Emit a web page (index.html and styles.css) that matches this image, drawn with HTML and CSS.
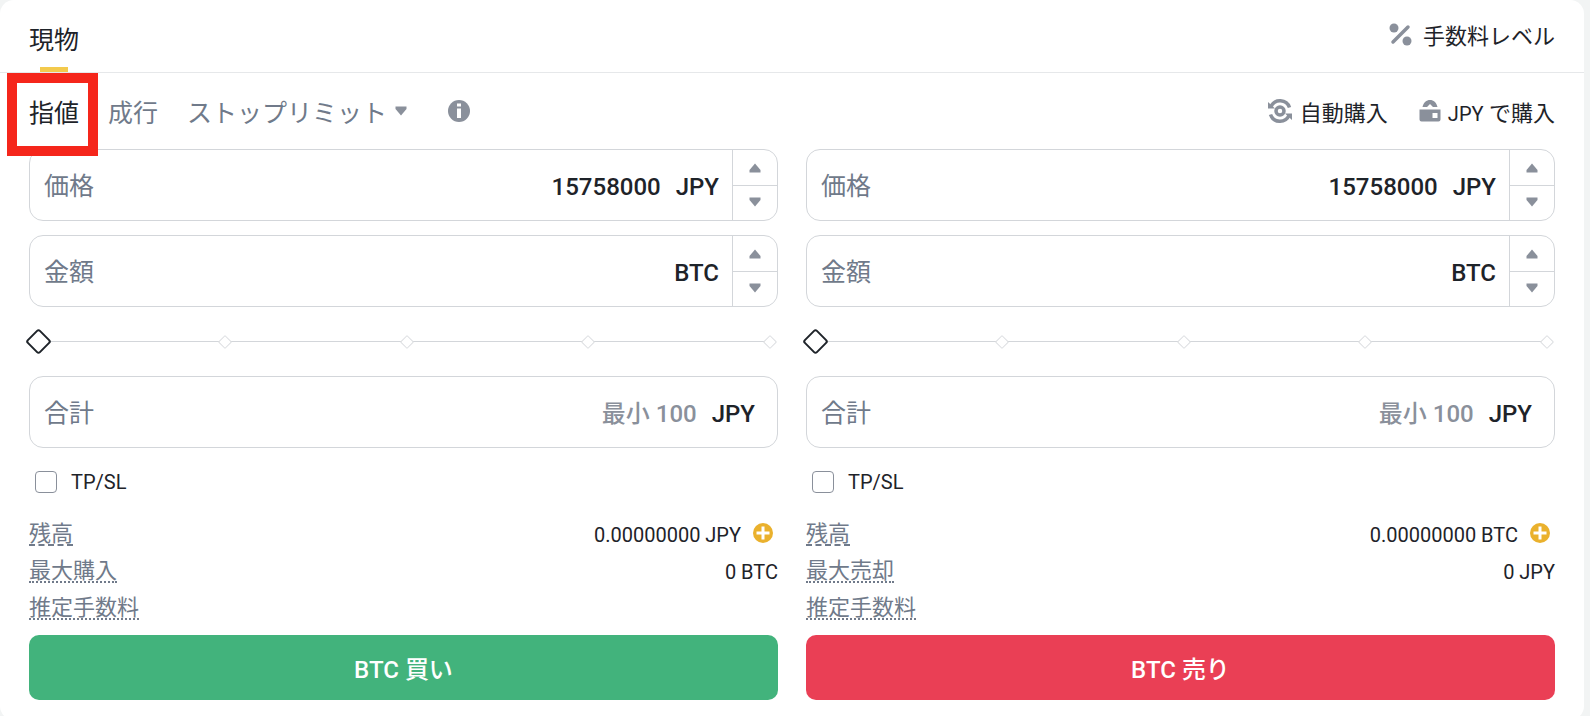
FILE: index.html
```
<!DOCTYPE html>
<html lang="ja">
<head>
    <meta charset="UTF-8">
    <meta name="viewport" content="width=device-width, initial-scale=1.0">
    <title>現物取引</title>
    <link rel="stylesheet" href="styles.css">
</head>
<body>

    <main class="panel">
        <header class="panel-header">
            <button type="button" class="market-tab">現物</button>
            <a href="#" class="fee-link">
                <svg width="24" height="24" viewBox="0 0 24 24">
                    <circle cx="6" cy="6" r="4.5"/>
                    <circle cx="19" cy="19" r="4.5"/>
                    <path d="M5 20L20 5" fill="none" stroke="#8a909b" stroke-width="3.5" stroke-linecap="round"/>
                </svg>
                手数料レベル
            </a>
        </header>

        <nav class="order-bar">
            <div class="order-tabs">
                <button type="button" class="order-tab active">指値</button>
                <button type="button" class="order-tab">成行</button>
                <button type="button" class="order-tab">ストップリミット
                    <svg width="12" height="10" viewBox="0 0 12 10"><path d="M0.5 0.5H11.5V3L6 9.5L0.5 3Z"/></svg>
                </button>
                <button type="button" class="info" aria-label="情報">
                    <svg width="24" height="24" viewBox="0 0 24 24">
                        <circle cx="12" cy="12" r="11"/>
                        <path d="M10 4.5h4v3h-4zM10 9.5h4v9.500h-4z" fill="#fff"/>
                    </svg>
                </button>
            </div>
            <div class="order-links">
                <a href="#">
                    <svg width="26" height="26" viewBox="0 0 26 26">
                        <path d="M4 8.5A10 10 0 0 1 22.5 9.500M22 17.500A10 10 0 0 1 3.500 16.500" fill="none" stroke="#8a909b" stroke-width="3.5"/>
                        <path d="M1 4V10.500H8ZM25 22V15.500H18Z"/>
                        <circle cx="13" cy="13" r="4" fill="none" stroke="#8a909b" stroke-width="3.5"/>
                    </svg>
                    自動購入
                </a>
                <a href="#">
                    <svg width="22" height="24" viewBox="0 0 22 24">
                        <path d="M3.5 8C4.5 3.500 7.500 1 11 1S17.500 3.500 18.500 8H14L11 5L8 8Z"/>
                        <path fill-rule="evenodd" d="M0.5 10.500H21.500V20.500Q21.500 22.500 19.500 22.500H2.500Q0.500 22.500 0.500 20.500ZM13.500 14V19H18.500V14Z"/>
                    </svg>
                    <span><span class="latin">JPY</span> で購入</span>
                </a>
            </div>
            <div class="highlight"></div>
        </nav>

        <div class="forms">
            <form class="order-form">
                <div class="field">
                    <label for="buy-price">価格</label>
                    <input type="text" id="buy-price" value="15758000">
                    <span class="unit">JPY</span>
                    <div class="stepper">
                        <button type="button" aria-label="増やす"><svg width="12" height="10" viewBox="0 0 12 10"><path d="M0.5 9.5H11.5V7L6 0.5L0.5 7Z"/></svg></button>
                        <button type="button" aria-label="減らす"><svg width="12" height="10" viewBox="0 0 12 10"><path d="M0.5 0.5H11.5V3L6 9.5L0.5 3Z"/></svg></button>
                    </div>
                </div>
                <div class="field">
                    <label for="buy-amount">金額</label>
                    <input type="text" id="buy-amount">
                    <span class="unit">BTC</span>
                    <div class="stepper">
                        <button type="button" aria-label="増やす"><svg width="12" height="10" viewBox="0 0 12 10"><path d="M0.5 9.5H11.5V7L6 0.5L0.5 7Z"/></svg></button>
                        <button type="button" aria-label="減らす"><svg width="12" height="10" viewBox="0 0 12 10"><path d="M0.5 0.5H11.5V3L6 9.5L0.5 3Z"/></svg></button>
                    </div>
                </div>
                <div class="slider">
                    <div class="ticks"><i></i><i></i><i></i><i></i><i></i></div>
                    <input type="range" min="0" max="100" value="0" aria-label="割合">
                </div>
                <div class="field field-total">
                    <label for="buy-total">合計</label>
                    <input type="text" id="buy-total" placeholder="最小 100">
                    <span class="unit">JPY</span>
                </div>
                <label class="tpsl"><input type="checkbox"> TP/SL</label>
                <dl class="summary">
                    <div>
                        <dt class="dashed">残高</dt>
                        <dd>0.00000000 JPY
                            <button type="button" class="plus" aria-label="入金">
                                <svg width="20" height="20" viewBox="0 0 20 20"><circle cx="10" cy="10" r="10"/><path d="M10 3.5V16.5M3.5 10H16.5" stroke="#fff" stroke-width="3"/></svg>
                            </button>
                        </dd>
                    </div>
                    <div><dt>最大購入</dt><dd>0 BTC</dd></div>
                    <div><dt>推定手数料</dt></div>
                </dl>
                <button type="submit" class="submit buy">BTC 買い</button>
            </form>

            <form class="order-form">
                <div class="field">
                    <label for="sell-price">価格</label>
                    <input type="text" id="sell-price" value="15758000">
                    <span class="unit">JPY</span>
                    <div class="stepper">
                        <button type="button" aria-label="増やす"><svg width="12" height="10" viewBox="0 0 12 10"><path d="M0.5 9.5H11.5V7L6 0.5L0.5 7Z"/></svg></button>
                        <button type="button" aria-label="減らす"><svg width="12" height="10" viewBox="0 0 12 10"><path d="M0.5 0.5H11.5V3L6 9.5L0.5 3Z"/></svg></button>
                    </div>
                </div>
                <div class="field">
                    <label for="sell-amount">金額</label>
                    <input type="text" id="sell-amount">
                    <span class="unit">BTC</span>
                    <div class="stepper">
                        <button type="button" aria-label="増やす"><svg width="12" height="10" viewBox="0 0 12 10"><path d="M0.5 9.5H11.5V7L6 0.5L0.5 7Z"/></svg></button>
                        <button type="button" aria-label="減らす"><svg width="12" height="10" viewBox="0 0 12 10"><path d="M0.5 0.5H11.5V3L6 9.5L0.5 3Z"/></svg></button>
                    </div>
                </div>
                <div class="slider">
                    <div class="ticks"><i></i><i></i><i></i><i></i><i></i></div>
                    <input type="range" min="0" max="100" value="0" aria-label="割合">
                </div>
                <div class="field field-total">
                    <label for="sell-total">合計</label>
                    <input type="text" id="sell-total" placeholder="最小 100">
                    <span class="unit">JPY</span>
                </div>
                <label class="tpsl"><input type="checkbox"> TP/SL</label>
                <dl class="summary">
                    <div>
                        <dt class="dashed">残高</dt>
                        <dd>0.00000000 BTC
                            <button type="button" class="plus" aria-label="入金">
                                <svg width="20" height="20" viewBox="0 0 20 20"><circle cx="10" cy="10" r="10"/><path d="M10 3.5V16.5M3.5 10H16.5" stroke="#fff" stroke-width="3"/></svg>
                            </button>
                        </dd>
                    </div>
                    <div><dt>最大売却</dt><dd>0 JPY</dd></div>
                    <div><dt>推定手数料</dt></div>
                </dl>
                <button type="submit" class="submit sell">BTC 売り</button>
            </form>
        </div>
    </main>

</body>
</html>
```
FILE: styles.css
```
* {
    box-sizing: border-box;
}
body {
    margin: 0;
    height: 100vh;
    overflow: hidden;
    background-color: #f2f4f4;
    color: #1e2329;
    font-family: Roboto, "Noto Sans CJK JP", sans-serif;
    font-size: 20px;
}
button, input {
    font: inherit;
    color: inherit;
    border: 0;
    padding: 0;
    margin: 0;
    background: none;
}
button {
    cursor: pointer;
}
a {
    color: inherit;
    text-decoration: none;
}
svg {
    display: block;
    flex: none;
    fill: #8a909b;
}
.panel {
    margin-right: 6px;
    padding-bottom: 20px;
    background-color: #fff;
    border-radius: 14px;
}

/* header */
.panel-header {
    display: flex;
    justify-content: space-between;
    height: 73px;
    padding: 0 29px;
    border-bottom: 1px solid #e6e8ea;
}
.market-tab {
    position: relative;
    padding-top: 4px;
    font-size: 25px;
}
.market-tab::after {
    content: "";
    position: absolute;
    left: 11px;
    bottom: 0;
    width: 28px;
    height: 5px;
    background-color: #f3ca4d;
}
.fee-link {
    display: flex;
    align-items: center;
    gap: 11px;
    padding-bottom: 4px;
    font-size: 22px;
}

/* order type bar */
.order-bar {
    position: relative;
    display: flex;
    justify-content: space-between;
    align-items: center;
    height: 76px;
    padding: 0 29px;
}
.order-tabs, .order-links, .order-links a {
    display: flex;
    align-items: center;
}
.order-tabs {
    gap: 29px;
    font-size: 25px;
}
.order-tab {
    display: flex;
    align-items: center;
    gap: 8px;
    color: #707a8a;
}
.order-tab.active {
    color: #1e2329;
}
.info {
    margin-left: 11px;
}
.order-links {
    gap: 31px;
    font-size: 22px;
}
.order-links a {
    gap: 7px;
}
.latin {
    font-size: 20px;
}
.highlight {
    position: absolute;
    left: 7px;
    top: 0;
    width: 91px;
    height: 83px;
    border: 10px solid #f5261b;
    pointer-events: none;
    z-index: 1;
}

/* forms */
.forms {
    display: grid;
    grid-template-columns: 1fr 1fr;
    gap: 28px;
    padding: 0 29px;
}
.field {
    display: flex;
    align-items: center;
    height: 72px;
    padding-left: 14px;
    border: 1px solid #d3d6da;
    border-radius: 14px;
    overflow: hidden;
    font-size: 24px;
    font-weight: 500;
}
.field + .field {
    margin-top: 14px;
}
.field label {
    padding-bottom: 2px;
    font-size: 25px;
    font-weight: 400;
    color: #707a8a;
}
.field input {
    flex: 1;
    min-width: 0;
    padding-top: 3px;
    text-align: right;
    outline: none;
}
.field input::placeholder {
    color: #8a909b;
    opacity: 1;
}
.unit {
    margin: 0 13px 0 15px;
    padding-top: 3px;
}
.field-total .unit {
    margin-right: 22px;
}
.stepper {
    display: grid;
    grid-template-rows: 1fr 1fr;
    width: 45px;
    height: 100%;
    border-left: 1px solid #d3d6da;
}
.stepper button {
    display: flex;
    align-items: center;
    justify-content: center;
}
.stepper button + button {
    padding-bottom: 2px;
    border-top: 1px solid #d3d6da;
}

/* amount slider */
.slider {
    position: relative;
    height: 69px;
}
.ticks {
    display: flex;
    justify-content: space-between;
    align-items: center;
    height: 100%;
    padding: 0 3px 0 9px;
    background: linear-gradient(#d3d6da, #d3d6da) 9px 50% / calc(100% - 18px) 1px no-repeat;
}
.ticks i {
    width: 10px;
    height: 10px;
    border: 1px solid #dcdee1;
    border-radius: 1px;
    background-color: #fff;
    transform: rotate(45deg);
}
.slider input {
    position: absolute;
    left: 0;
    top: 0;
    width: 100%;
    height: 100%;
    appearance: none;
}
.slider input::-webkit-slider-thumb {
    appearance: none;
    width: 19px;
    height: 19px;
    border: 2px solid #1e2329;
    border-radius: 3px;
    background-color: #fff;
    transform: rotate(45deg);
}

.tpsl {
    display: flex;
    align-items: center;
    gap: 14px;
    height: 67px;
    padding-left: 6px;
}
.tpsl input {
    appearance: none;
    width: 22px;
    height: 22px;
    border: 1px solid #8a909b;
    border-radius: 4px;
}
.tpsl input:checked {
    background-color: #1e2329;
}

/* balance rows */
.summary {
    margin: 0 0 8px;
    padding-top: 1px;
}
.summary div {
    display: flex;
    align-items: center;
    justify-content: space-between;
    height: 37px;
}
.summary dt {
    font-size: 22px;
    line-height: 20px;
    color: #707a8a;
    border-bottom: 2px dotted #707a8a;
}
.summary .dashed {
    border-bottom-style: dashed;
}
.summary dd {
    display: flex;
    align-items: center;
    gap: 12px;
    margin: 0;
}
.plus {
    margin-right: 5px;
    padding-bottom: 4px;
}
.plus svg {
    fill: #eab12d;
}
.submit {
    display: block;
    width: 100%;
    height: 65px;
    border-radius: 10px;
    color: #fff;
    font-size: 24px;
    font-weight: 500;
}
.buy {
    background-color: #42b37c;
}
.sell {
    background-color: #ea3f55;
}
```
